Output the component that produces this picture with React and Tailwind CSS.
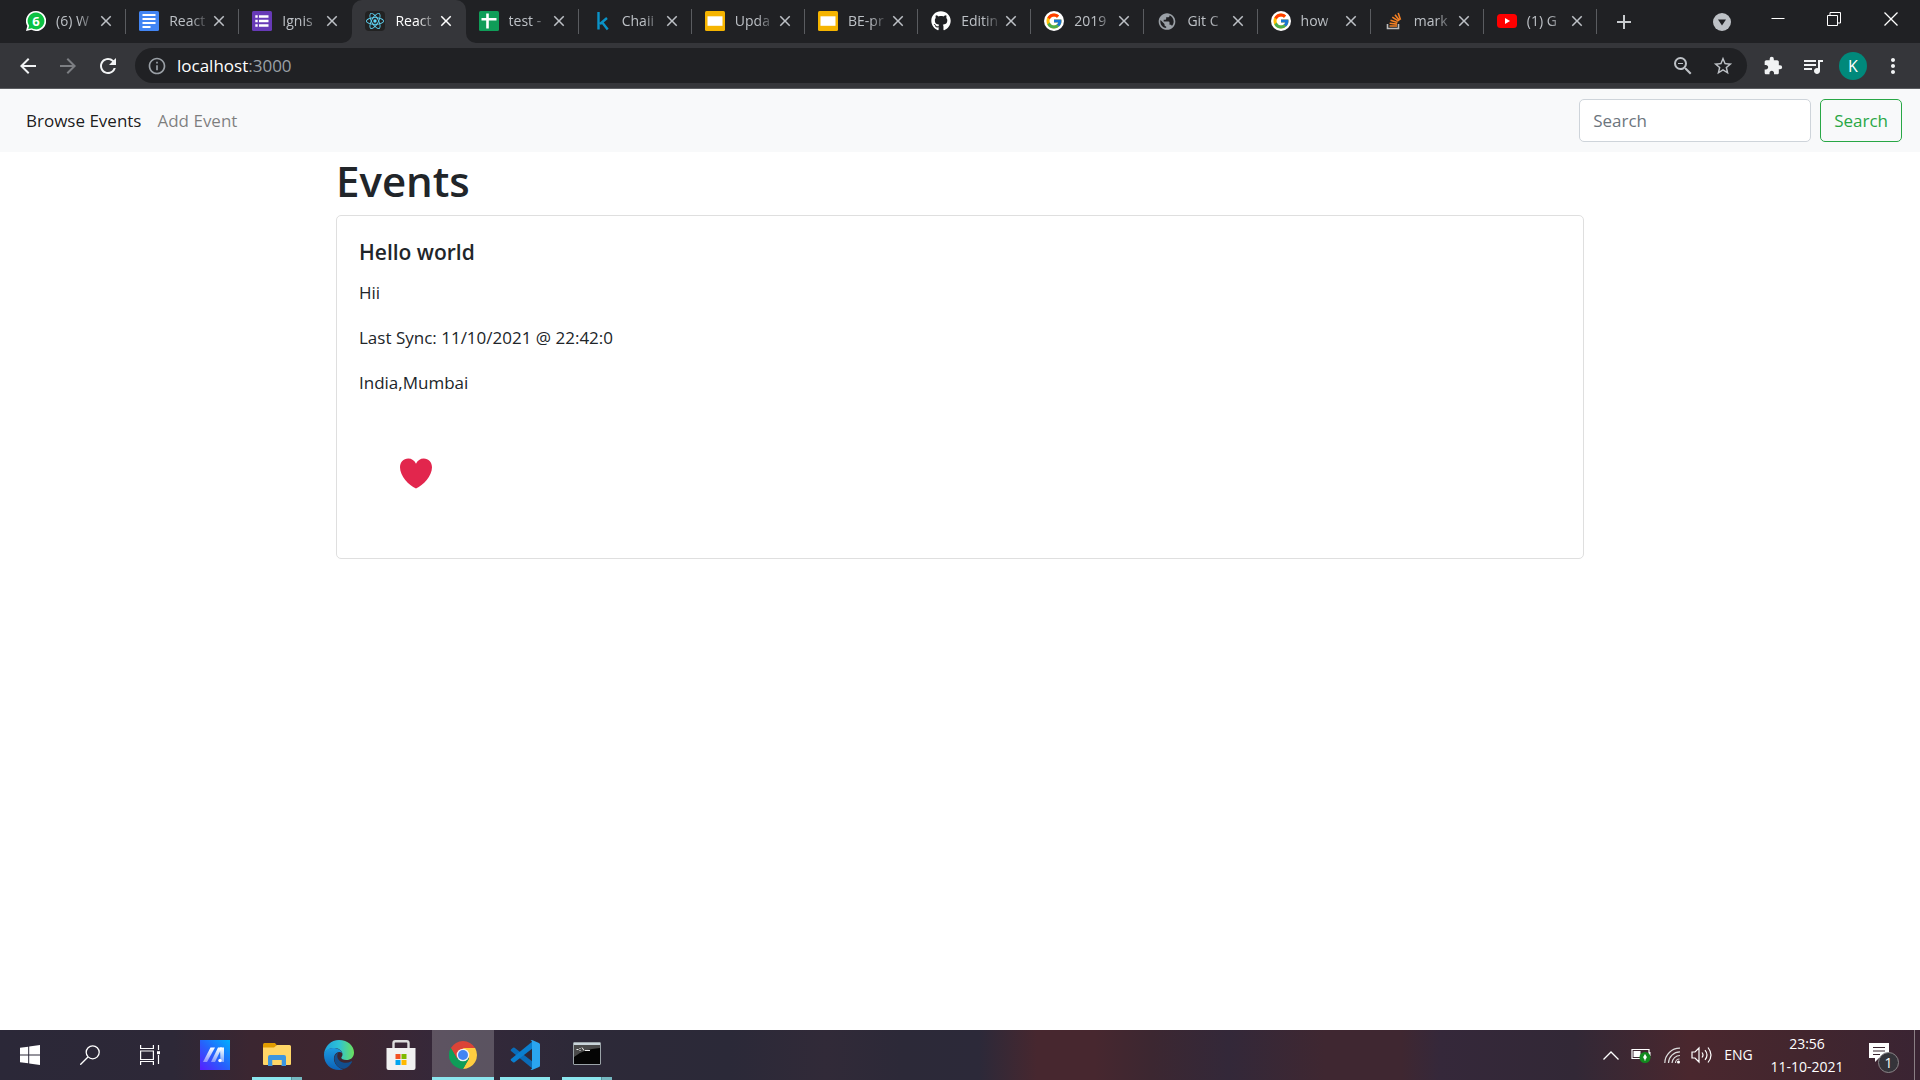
import React from "react";
import {
  MdAdd, MdArrowBack, MdArrowForward, MdClose, MdExtension, MdInfoOutline,
  MdMoreVert, MdPublic, MdQueueMusic, MdRefresh, MdStarBorder, MdZoomOut,
} from "react-icons/md";
import { FaGithub } from "react-icons/fa";
import { FcGoogle } from "react-icons/fc";
import { SiReact } from "react-icons/si";

const WhatsAppIcon = () => (
  <svg viewBox="0 0 20 20" className="size-5">
    <path d="M10 0a10 10 0 1 1-4.600 18.800L0 20l1.300-5A10 10 0 0 1 10 0z" fill="#fff" />
    <path d="M10 1.600a8.400 8.400 0 1 1-4.300 15.600L2.200 18l.9-3.300A8.400 8.400 0 0 1 10 1.600z" fill="#0cc143" />
    <text x="10" y="14.500" textAnchor="middle" fontSize="13" fontWeight="700" fill="#fff" fontFamily="Open Sans, sans-serif">6</text>
  </svg>
);
const DocsIcon = () => (
  <svg viewBox="0 0 20 20" className="size-5">
    <rect width="20" height="20" rx="1.500" fill="#4285f4" />
    <path d="M3.500 4h13M3.500 8h13M3.500 12h13M3.500 16h8" stroke="#fff" strokeWidth="2" />
  </svg>
);
const FormsIcon = () => (
  <svg viewBox="0 0 20 20" className="size-5">
    <rect width="20" height="20" rx="1.500" fill="#673ab7" />
    <path d="M7 5.500h9.500M7 10h9.500M7 14.500h9.500" stroke="#fff" strokeWidth="2.400" />
    <path d="M3.300 5.500h2.400M3.300 10h2.400M3.300 14.500h2.400" stroke="#fff" strokeWidth="2.400" />
  </svg>
);
const ReactIcon = () => (
  <span className="flex size-5 items-center justify-center rounded-sm bg-[#222]">
    <SiReact className="size-[18px] text-[#61dafb]" />
  </span>
);
const SheetsIcon = () => (
  <svg viewBox="0 0 20 20" className="size-5">
    <rect width="20" height="20" rx="1.500" fill="#0f9d58" />
    <path d="M2.500 8.200h15M8.500 2.500v15" stroke="#fff" strokeWidth="2.600" />
  </svg>
);
const KaggleIcon = () => (
  <svg viewBox="0 0 20 20" className="size-5">
    <path d="M6.500 1v17.500M15 7l-7 6M9.700 10.800l6 7.700" stroke="#0a93c8" strokeWidth="2.400" fill="none" />
  </svg>
);
const SlidesIcon = () => (
  <svg viewBox="0 0 20 20" className="size-5">
    <rect width="20" height="20" rx="1.500" fill="#f5b400" />
    <rect x="2.500" y="5.300" width="15" height="9.500" fill="#fff" />
  </svg>
);
const GitHubIcon = () => (
  <span className="flex size-5 items-center justify-center">
    <FaGithub className="size-5 text-white" />
  </span>
);
const GoogleIcon = () => (
  <span className="flex size-5 items-center justify-center rounded-full bg-white">
    <FcGoogle className="size-[18px]" />
  </span>
);
const GlobeIcon = () => <MdPublic className="size-[21px] text-[#9aa0a6]" />;
const StackIcon = () => (
  <svg viewBox="0 0 20 20" className="size-5" fill="none">
    <path d="M3.500 13v4.500h11V13" stroke="#bcbbbb" strokeWidth="1.600" />
    <path d="M5.500 15h7.500M5.600 12.300l7.400.8M6.500 9.300l7 2.200M8.300 6.200l6.200 4M11 3.700l4.500 5.800M14.200 2l2.300 6.800" stroke="#f48024" strokeWidth="1.600" />
  </svg>
);
const YouTubeIcon = () => (
  <svg viewBox="0 0 20 20" className="size-5">
    <rect y="3" width="20" height="14" rx="3.500" fill="#f00" />
    <path d="M8 7l5 3-5 3z" fill="#fff" />
  </svg>
);

const TABS = [
  { title: "(6) W", Icon: WhatsAppIcon },
  { title: "React", Icon: DocsIcon },
  { title: "Ignis", Icon: FormsIcon, noLine: true },
  { title: "React", Icon: ReactIcon, active: true, noLine: true },
  { title: "test -", Icon: SheetsIcon },
  { title: "Chaii", Icon: KaggleIcon },
  { title: "Upda", Icon: SlidesIcon },
  { title: "BE-pr", Icon: SlidesIcon },
  { title: "Editin", Icon: GitHubIcon },
  { title: "2019", Icon: GoogleIcon },
  { title: "Git C", Icon: GlobeIcon },
  { title: "how", Icon: GoogleIcon },
  { title: "mark", Icon: StackIcon },
  { title: "(1) G", Icon: YouTubeIcon },
];

function Tab({ title, Icon, active, noLine }) {
  return (
    <li className={`relative flex h-[43px] min-w-0 flex-1 items-center pb-px pl-[13px] ${active ? "rounded-t-[10px] bg-[#35363a] text-white" : "text-[#bdc1c6]"}`}>
      {active && (
        <>
          <svg className="absolute bottom-0 -left-2.5 size-2.5" viewBox="0 0 10 10"><path d="M10 0v10H0A10 10 0 0 0 10 0z" fill="#35363a" /></svg>
          <svg className="absolute -right-2.5 bottom-0 size-2.5" viewBox="0 0 10 10"><path d="M0 0v10h10A10 10 0 0 1 0 0z" fill="#35363a" /></svg>
        </>
      )}
      <button type="button" className="flex min-w-0 flex-1 items-center gap-2.5">
        <span className="flex w-5 shrink-0 justify-center"><Icon /></span>
        <span className="flex-1 overflow-hidden text-left text-sm whitespace-nowrap [mask-image:linear-gradient(to_right,#000_60%,transparent_110%)]">{title}</span>
      </button>
      <button type="button" aria-label="Close tab" className="mr-2.5 ml-1 flex size-[18px] items-center justify-center">
        <MdClose className="size-[18px] shrink-0" />
      </button>
      <span className={`h-[25px] w-px ${noLine ? "" : "bg-[#5a5c60]"}`} />
    </li>
  );
}

function TabStrip() {
  return (
    <div className="flex h-[43px] bg-[#202124]">
      <ul className="flex flex-1 pl-[13px]">
        {TABS.map((t, i) => <Tab key={i} {...t} />)}
      </ul>
      <div className="flex w-[323px] items-start text-white">
        <button type="button" aria-label="New tab" className="flex h-[43px] w-[54px] items-center justify-center text-[#c8cbce]"><MdAdd className="size-6" /></button>
        <span className="flex-1" />
        <button type="button" aria-label="Search tabs" className="flex h-[43px] w-10 items-center justify-center">
          <svg viewBox="0 0 18 18" className="size-[18px]"><circle cx="9" cy="9" r="9" fill="#bdc1c6" /><path d="M5 6.500h8L9 12.500z" fill="#202124" /></svg>
        </button>
        <button type="button" aria-label="Minimize" className="ml-2 flex h-[38px] w-14 items-center justify-center">
          <svg viewBox="0 0 14 14" className="size-3.5"><path d="M.5 6.500h13" stroke="#fff" /></svg>
        </button>
        <button type="button" aria-label="Restore" className="flex h-[38px] w-14 items-center justify-center">
          <svg viewBox="0 0 14 14" className="size-3.5" fill="none"><path d="M.5 3.500h10v10H.5zM3 3V.5h10.500V11H11" stroke="#fff" /></svg>
        </button>
        <button type="button" aria-label="Close" className="flex h-[38px] w-[58px] items-center justify-center">
          <svg viewBox="0 0 14 14" className="size-3.5"><path d="M.5.5l13 13M13.500.5l-13 13" stroke="#fff" strokeWidth="1.300" /></svg>
        </button>
      </div>
    </div>
  );
}

function Toolbar() {
  return (
    <div className="flex h-[46px] items-center border-b border-[#5b5d61] bg-[#35363a] pr-[7px] pl-2 text-[#f1f3f4]">
      <button type="button" aria-label="Back" className="flex w-10 justify-center"><MdArrowBack className="size-6" /></button>
      <button type="button" aria-label="Forward" className="flex w-10 justify-center text-[#7d7f83]"><MdArrowForward className="size-6" /></button>
      <button type="button" aria-label="Reload" className="flex w-10 justify-center"><MdRefresh className="size-6" /></button>
      <div className="ml-[7px] flex h-[35px] flex-1 items-center rounded-full bg-[#202124] pr-1 pl-3">
        <MdInfoOutline className="size-5 text-[#9aa0a6]" />
        <p className="ml-2.5 flex-1 text-[17px] text-white">localhost<span className="text-[#9aa0a6]">:3000</span></p>
        <button type="button" aria-label="Zoom" className="flex w-10 justify-center text-[#bdc1c6]"><MdZoomOut className="size-6" /></button>
        <button type="button" aria-label="Bookmark" className="flex w-10 justify-center text-[#bdc1c6]"><MdStarBorder className="size-[22px]" /></button>
      </div>
      <button type="button" aria-label="Extensions" className="ml-1.5 flex w-10 justify-center"><MdExtension className="size-5" /></button>
      <button type="button" aria-label="Media" className="flex w-10 justify-center"><MdQueueMusic className="size-6" /></button>
      <button type="button" aria-label="Profile" className="flex w-10 justify-center"><span className="flex size-7 items-center justify-center rounded-full bg-[#00897b] text-base text-white">K</span></button>
      <button type="button" aria-label="Menu" className="flex w-10 justify-center"><MdMoreVert className="size-6" /></button>
    </div>
  );
}

function Navbar() {
  return (
    <nav className="flex items-center bg-[#f8f9fa] py-2.5 pr-[18px] pl-[26px] text-[17px] leading-[27px]">
      <a href="#browse" className="text-black/90">Browse Events</a>
      <a href="#add" className="ml-4 text-black/50">Add Event</a>
      <form className="ml-auto flex gap-[9px]">
        <input type="search" placeholder="Search" aria-label="Search" className="h-[43px] w-[232px] rounded-[5px] border border-[#ced4da] bg-white px-[13px] placeholder:text-[#6c757d]" />
        <button type="button" className="h-[43px] rounded-[5px] border border-[#28a745] px-[13px] text-[#28a745]">Search</button>
      </form>
    </nav>
  );
}

function EventCard() {
  return (
    <article className="rounded-[5px] border border-[#dfdfdf] px-[22px] pt-[23px] pb-7 text-[17px] leading-[27px]">
      <h2 className="mb-[13px] text-[21px] leading-[27px] font-semibold">Hello world</h2>
      <p className="mb-[18px]">Hii</p>
      <p className="mb-[18px]">Last Sync: 11/10/2021 @ 22:42:0</p>
      <p className="mb-5">India,Mumbai</p>
      <button type="button" aria-label="Like" className="flex size-[114px] items-center justify-center">
        <svg viewBox="0 0 33 31" className="h-[31px] w-8">
          <path d="M16.500 5.500C18 2 21 0 24.500 0 29.500 0 33 4 33 9c0 9-9 18.500-16.500 22C9 27.500 0 18 0 9c0-5 3.500-9 8.500-9 3.500 0 6.500 2 8 5.500z" fill="#e2264d" />
        </svg>
      </button>
    </article>
  );
}

const WindowsIcon = () => (
  <svg viewBox="0 0 20 20" className="size-5" fill="#fff"><path d="M0 2.800L8.200 1.700v7.800H0zM9.200 1.500L20 0v9.500H9.200zM0 10.500h8.200v7.800L0 17.200zM9.200 10.500H20V20L9.200 18.500z" /></svg>
);
const SearchIcon = () => (
  <svg viewBox="0 0 20 20" className="size-5" fill="none" stroke="#fff" strokeWidth="1.300"><circle cx="12.700" cy="7.300" r="6.500" /><path d="M8 12l-7.700 7.700" /></svg>
);
const TaskViewIcon = () => (
  <svg viewBox="0 0 20 20" className="size-5" fill="none" stroke="#fff" strokeWidth="1.200"><path d="M.6 0v3.500h12.800V0M.6 20v-3.500h12.800V20M.6 6h12.800v8.500H.6zM18.500 0v5M18.500 10v9" /><path d="M17 6.200h3v3h-3z" fill="#fff" stroke="none" /></svg>
);
const MyAsusIcon = () => (
  <svg viewBox="0 0 30 30" className="size-[30px]">
    <defs><linearGradient id="asus" x1="0" y1="1" x2="1" y2="0"><stop stopColor="#5a1cff" /><stop offset=".5" stopColor="#2563fb" /><stop offset="1" stopColor="#00b0ff" /></linearGradient>
      <linearGradient id="asusBar" x1="0" y1="1" x2="0" y2="0"><stop stopColor="#fff" stopOpacity=".4" /><stop offset="1" stopColor="#fff" /></linearGradient></defs>
    <path d="M0 0h30v30H0z" fill="url(#asus)" />
    <path d="M3 22L10.500 7.500H15L7 22z" fill="url(#asusBar)" />
    <path d="M11 22l7-14.500h4L15 22z" fill="url(#asusBar)" />
    <path d="M20 7.500h4V22h-3.500z" fill="url(#asusBar)" />
    <circle cx="20" cy="20.500" r="1.700" fill="#fff" />
  </svg>
);
const ExplorerIcon = () => (
  <svg viewBox="0 0 28 24" className="h-6 w-7">
    <path d="M0 1.500Q0 0 1.500 0H12l2 2.500V8H0z" fill="#e19c00" />
    <path d="M0 4.500h11l3-2.500h12.500Q28 2 28 3.500V21q0 1-1 1H1q-1 0-1-1z" fill="#ffd667" />
    <path d="M5 23v-9q0-2 2-2h14q2 0 2 2v9h-4.500v-6h-9v6z" fill="#3c96e0" />
    <path d="M9.500 17h9v5h-9z" fill="#ffd667" />
  </svg>
);
const EdgeIcon = () => (
  <svg viewBox="0 0 30 30" className="size-[30px]">
    <defs>
      <linearGradient id="edgeTop"><stop stopColor="#1da1dc" /><stop offset=".5" stopColor="#2ec2d5" /><stop offset="1" stopColor="#6be05c" /></linearGradient>
      <linearGradient id="edgeBody" x1="0" y1="0" x2="0" y2="1"><stop stopColor="#1c9ae0" /><stop offset="1" stopColor="#0c62b8" /></linearGradient>
    </defs>
    <path d="M0 14C1 6 7 0 15 0c9 0 15 6 15 12.500 0 5-3.500 7.500-7.500 7.500-3.500 0-5.200-1.200-5.200-2.200 0-.9 1.200-1.300 1.200-3.600C18.500 11 15 8 10 8 5 8 1.500 11 0 14z" fill="url(#edgeTop)" />
    <path d="M0 15c0-4 4-7 9-7 5 0 8.500 2.500 9.300 5C16 11 11 12 10 17c-1 6 4 11 9 12.300C17 30 16 30 15 30 7 30 0 24 0 15z" fill="url(#edgeBody)" />
    <path d="M14.500 12.500C11 14 10 17 10.500 20c1 6 6 9.500 10.500 8.500 3-1.200 5.500-3.500 7-6.500.3-.7-.3-1-1-.6-5 2.700-12 1-13.500-4-.5-2 0-3.700 1-4.900z" fill="#124f8f" />
  </svg>
);
const StoreIcon = () => (
  <svg viewBox="0 0 30 30" className="size-[30px]">
    <path d="M7.500 9V3q0-1.800 1.800-1.800h11.400q1.800 0 1.800 1.800v6" fill="none" stroke="#ddd" strokeWidth="2.400" />
    <path d="M.5 8h29v20q0 2-2 2h-25q-2 0-2-2z" fill="#f1f1f1" />
    <path d="M9.500 14h5v5h-5z" fill="#f25022" /><path d="M15.500 14h5v5h-5z" fill="#7fba00" />
    <path d="M9.500 20h5v5h-5z" fill="#00a4ef" /><path d="M15.500 20h5v5h-5z" fill="#ffb900" />
  </svg>
);
const ChromeIcon = () => (
  <svg viewBox="0 0 28 28" className="size-7">
    <path d="M14 14L1.880 7A14 14 0 0 1 26.120 7z" fill="#db4437" />
    <path d="M14 7h12.120A14 14 0 0 1 14 28l6-10.500z" fill="#ffcd40" />
    <path d="M1.880 7A14 14 0 0 0 14 28l6.060-10.500-12 0z" fill="#0f9d58" />
    <path d="M1.880 7L7.940 17.500 14 14V7z" fill="#db4437" />
    <path d="M1.880 7A14 14 0 0 0 1 19L7.940 17.500z" fill="#0f9d58" />
    <circle cx="14" cy="14" r="6.300" fill="#f1f1f1" /><circle cx="14" cy="14" r="5" fill="#4285f4" />
  </svg>
);
const CodeIcon = () => (
  <svg viewBox="0 0 30 30" className="size-[30px]">
    <path d="M1 9.500L3 7.800q.8-.5 1.600 0L23 22v7L1 11q-.8-.8 0-1.500z" fill="#0a6cb8" />
    <path d="M1 20.500l2 1.700q.8.500 1.600 0L23 8V1L1 19q-.8.800 0 1.500z" fill="#0a7fcf" />
    <path d="M22 0l7 3q1 .5 1 1.500v21q0 1-1 1.500l-7 3q-1 .2-1.500-.4Q22 29.500 22 28V2q0-1.500-1.500-1.600Q21 0 22 0z" fill="#2aa5f0" />
  </svg>
);
const TerminalIcon = () => (
  <svg viewBox="0 0 28 23" className="mb-1 h-[23px] w-7">
    <rect x=".5" y=".5" width="27" height="22" rx=".5" fill="#050505" stroke="#9ba3a8" />
    <path d="M1 1h26v2H1z" fill="#c9d4da" />
    <path d="M1 3h26v3Q10 7 1 15z" fill="#4a4a4a" />
    <path d="M3.500 7.500h2M7 6v1M7 8v1M9 5.500l2 3M12 8.500h5" stroke="#eee" fill="none" />
  </svg>
);

const PINNED = [
  { name: "MyASUS", Icon: MyAsusIcon },
  { name: "File Explorer", Icon: ExplorerIcon, bar: "stack" },
  { name: "Edge", Icon: EdgeIcon },
  { name: "Store", Icon: StoreIcon },
  { name: "Chrome", Icon: ChromeIcon, active: true },
  { name: "Code", Icon: CodeIcon, bar: "single" },
  { name: "Command Prompt", Icon: TerminalIcon, bar: "stack" },
];

function Taskbar() {
  return (
    <footer className="flex h-[50px] items-stretch bg-[linear-gradient(90deg,#2b2838_0%,#2d2837_9%,#3b2631_13%,#3e2630_18%,#35283a_23%,#2d2938_30%,#2b2938_38%,#312a38_43%,#2c2938_47%,#2c2939_51%,#47272f_54%,#47272f_57%,#3c2731_60%,#332839_64%,#3f2731_69%,#3f2731_73%,#35283a_75%,#322836_82%,#4a272e_88%,#42262e_94%,#3a2433_100%)] text-sm text-white">
      <button type="button" aria-label="Start" className="flex w-[60px] items-center justify-center"><WindowsIcon /></button>
      <button type="button" aria-label="Search Windows" className="flex w-[60px] items-center justify-center"><SearchIcon /></button>
      <button type="button" aria-label="Task view" className="mr-1 flex w-[60px] items-center justify-center"><TaskViewIcon /></button>
      {PINNED.map(({ name, Icon, bar, active }) => (
        <button key={name} type="button" aria-label={name} className={`relative flex w-[62px] items-center justify-center ${active ? "bg-white/20" : ""}`}>
          <Icon />
          {active && <span className="absolute inset-x-0 bottom-0 h-[3px] bg-[#8be5ee]" />}
          {bar && (
            <span className="absolute inset-x-1.5 bottom-0 flex h-[3px] gap-px bg-[#5b919a]">
              <span className="flex-1 bg-[#8be5ee]" />
              {bar === "stack" && <span className="w-2.5 bg-[#74b7c0]" />}
            </span>
          )}
        </button>
      ))}
      <div className="ml-auto flex items-center">
        <button type="button" aria-label="Show hidden icons" className="flex w-7 justify-center">
          <svg viewBox="0 0 16 9" className="h-[9px] w-4" fill="none"><path d="M.5 8.500L8 1l7.500 7.500" stroke="#fff" strokeWidth="1.300" /></svg>
        </button>
        <span className="flex w-8 justify-center">
          <svg viewBox="0 0 20 16" className="h-4 w-5" fill="none"><path d="M1 2.500h17v9H1z" stroke="#fff" strokeWidth="1.200" /><path d="M2.500 4H9.500v6h-7z" fill="#fff" /><path d="M18 5h1.500v4H18z" fill="#fff" /><circle cx="14" cy="10.500" r="5.500" fill="#128a1e" /><path d="M14 7.500q3 3 0 5Q11 10.500 14 7.500zM14 11.500v2.500" fill="#fff" stroke="#fff" strokeWidth=".6" /></svg>
        </span>
        <span className="flex w-[29px] justify-center">
          <svg viewBox="0 0 16 17" className="h-[17px] w-4" fill="none" stroke="#ddd" strokeWidth="1.200"><path d="M.8 16A15 15 0 0 1 16 1.200M4.500 16A11.500 11.500 0 0 1 16 4.800M8 16a8 8 0 0 1 8-7.500" /><path d="M11.500 16a4 4 0 0 1 4-4" /><circle cx="14.500" cy="15" r="1.500" fill="#fff" stroke="none" /></svg>
        </span>
        <span className="flex w-[30px] justify-center">
          <svg viewBox="0 0 21 18" className="h-[18px] w-[21px]" fill="none" stroke="#fff" strokeWidth="1.200"><path d="M1 6h3l4-4v14l-4-4H1zM11 6.500q2 2.500 0 5M14 4.200q4 4.800 0 9.600M17 1.500q6 7.500 0 15" /></svg>
        </span>
        <span className="flex w-[45px] justify-center">ENG</span>
        <p className="w-[92px] text-center leading-[23px]">23:56<br />11-10-2021</p>
        <button type="button" aria-label="Notifications" className="relative ml-3.5 flex w-[47px]">
          <svg viewBox="0 0 32 32" className="mt-2 size-8">
            <path d="M2 0h20v15H12l-4 4v-4H2z" fill="#fff" /><path d="M6 4.500h12M6 8h12M6 11.500h7" stroke="#3a2630" strokeWidth="1.200" />
            <circle cx="21.500" cy="19.500" r="10" fill="#35343a" stroke="#8b8689" />
            <text x="21.500" y="24.500" textAnchor="middle" fontSize="14" fill="#fff" fontFamily="Open Sans, sans-serif">1</text>
          </svg>
        </button>
        <span className="mr-[5px] h-[50px] w-px bg-[#8a7e84]" />
      </div>
    </footer>
  );
}

export default function App() {
  return (
    <div className="flex min-h-screen flex-col bg-white font-['Open_Sans','Noto_Sans',sans-serif] text-[#212529]">
      <header>
        <TabStrip />
        <Toolbar />
      </header>
      <Navbar />
      <main className="mx-auto w-full max-w-[1248px] flex-1">
        <h1 className="mb-[5px] text-[42px] leading-[58px] font-semibold">Events</h1>
        <EventCard />
      </main>
      <Taskbar />
    </div>
  );
}
